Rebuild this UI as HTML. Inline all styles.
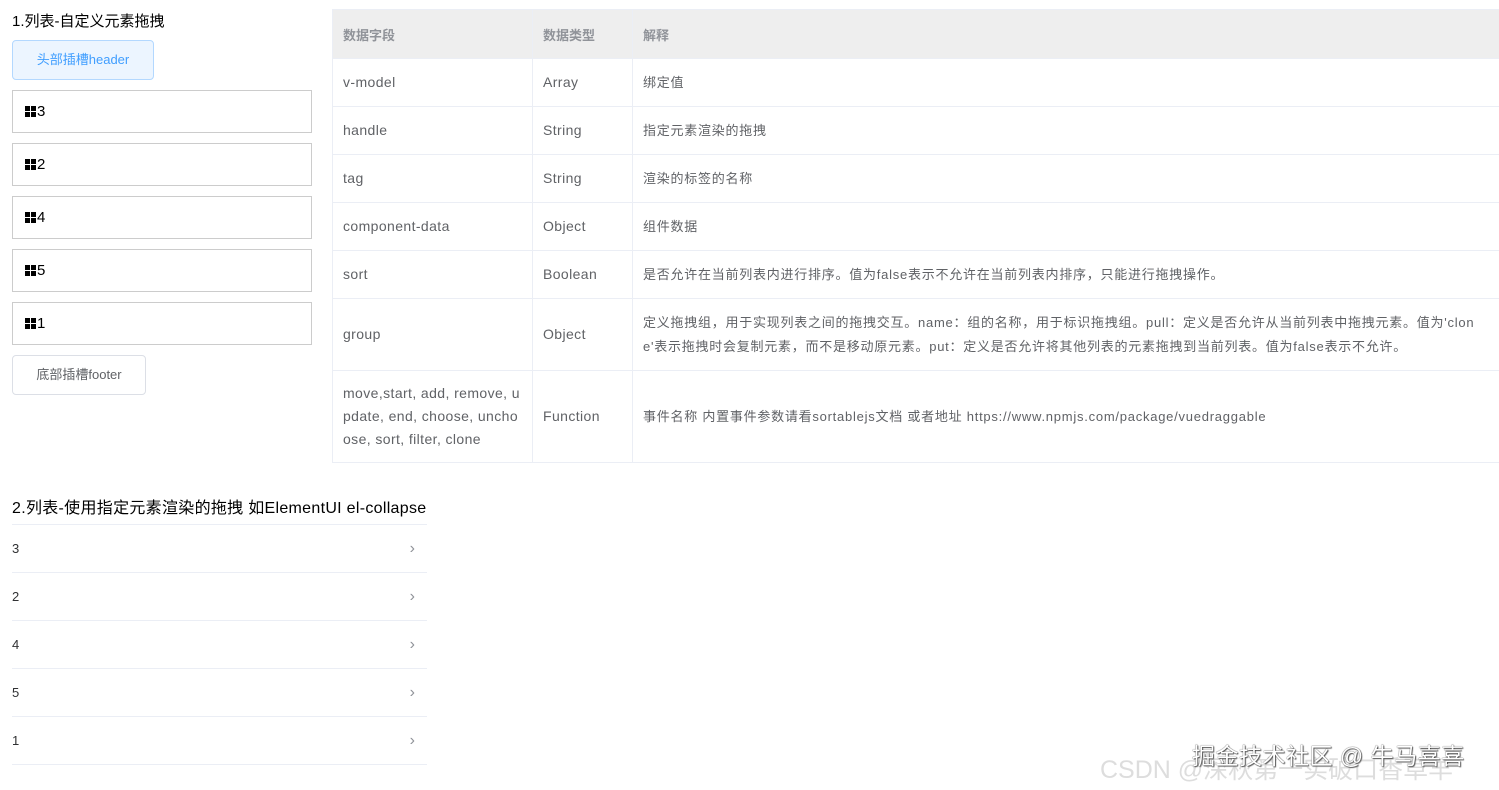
<!DOCTYPE html>
<html><head><meta charset="utf-8"><style>
*{box-sizing:border-box;margin:0;padding:0}
body{width:1499px;height:790px;background:#fff;font-family:"Liberation Sans","Noto Sans CJK SC",sans-serif;position:relative;overflow:hidden;color:#303133}
.a{position:absolute}
.t1{left:12px;top:10px;font-size:15px;color:#000}
.hb{left:12px;top:40px;width:142px;height:40px;background:#ecf5ff;border:1px solid #b3d8ff;border-radius:4px;color:#409eff;font-size:13px;text-align:center;line-height:38px}
.it{left:12px;width:300px;height:43px;border:1px solid #ccc;font-size:15px;color:#000;line-height:41px;padding-left:12px}
.it i{display:inline-block;width:11px;height:11px;margin-right:1px;vertical-align:-1px;background:
linear-gradient(#000,#000) 0 0/5px 5px no-repeat,linear-gradient(#000,#000) 6px 0/5px 5px no-repeat,
linear-gradient(#000,#000) 0 6px/5px 5px no-repeat,linear-gradient(#000,#000) 6px 6px/5px 5px no-repeat}
.fb{left:12px;top:355px;width:134px;height:40px;border:1px solid #dcdfe6;border-radius:4px;color:#606266;font-size:13px;text-align:center;line-height:38px}
table{position:absolute;left:332px;top:9px;width:1180px;border-collapse:collapse;font-size:14px;color:#606266}
td,th{border:1px solid #ebeef5;padding:0 10px;text-align:left;vertical-align:middle}
th{background:#eee;color:#909399;font-size:13px;font-weight:bold;height:49px}
td{height:48px;line-height:23px;letter-spacing:0.4px}
td.c{font-size:13px;line-height:24px;letter-spacing:0.75px;padding-right:15px}
.t2{left:12px;top:494px;font-size:16px;color:#000;letter-spacing:0.3px}
.cr{left:12px;width:415px;height:48px;border-top:1px solid #ebeef5;font-size:13px;color:#303133;line-height:48px}
.cr span{position:absolute;right:12px;top:0;color:#909399;font-size:16px}
.cl{left:12px;top:764px;width:415px;border-top:1px solid #ebeef5}
.wm{font-size:23px;color:#fff;text-shadow:0 0 1px #000,1px 1px 1px #666;letter-spacing:0.5px}
</style></head><body>
<div class="a t1">1.列表-自定义元素拖拽</div>
<div class="a hb">头部插槽header</div>
<div class="a it" style="top:90px"><i></i>3</div>
<div class="a it" style="top:143px"><i></i>2</div>
<div class="a it" style="top:196px"><i></i>4</div>
<div class="a it" style="top:249px"><i></i>5</div>
<div class="a it" style="top:302px"><i></i>1</div>
<div class="a fb">底部插槽footer</div>
<table>
<tr><th style="width:200px">数据字段</th><th style="width:100px">数据类型</th><th>解释</th></tr>
<tr><td>v-model</td><td>Array</td><td class="c">绑定值</td></tr>
<tr><td>handle</td><td>String</td><td class="c">指定元素渲染的拖拽</td></tr>
<tr><td>tag</td><td>String</td><td class="c">渲染的标签的名称</td></tr>
<tr><td>component-data</td><td>Object</td><td class="c">组件数据</td></tr>
<tr><td>sort</td><td>Boolean</td><td class="c">是否允许在当前列表内进行排序。值为false表示不允许在当前列表内排序，只能进行拖拽操作。</td></tr>
<tr><td style="height:72px">group</td><td>Object</td><td class="c" style="word-break:break-all">定义拖拽组，用于实现列表之间的拖拽交互。name：组的名称，用于标识拖拽组。pull：定义是否允许从当前列表中拖拽元素。值为'clone'表示拖拽时会复制元素，而不是移动原元素。put：定义是否允许将其他列表的元素拖拽到当前列表。值为false表示不允许。</td></tr>
<tr><td style="height:92px;word-break:break-all">move,start, add, remove, update, end, choose, unchoose, sort, filter, clone</td><td>Function</td><td class="c">事件名称 内置事件参数请看sortablejs文档 或者地址 https://www.npmjs.com/package/vuedraggable</td></tr>
</table>
<div class="a t2">2.列表-使用指定元素渲染的拖拽 如ElementUI el-collapse</div>
<div class="a cr" style="top:524px">3<span>›</span></div>
<div class="a cr" style="top:572px">2<span>›</span></div>
<div class="a cr" style="top:620px">4<span>›</span></div>
<div class="a cr" style="top:668px">5<span>›</span></div>
<div class="a cr" style="top:716px">1<span>›</span></div>
<div class="a cl"></div>
<div class="a" style="left:1100px;top:750px;font-size:25px;color:#ddd">CSDN @深秋第一实破口香草羊</div>
<div class="a wm" style="left:1192px;top:737px">掘金技术社区 @ 牛马喜喜</div>
</body></html>
